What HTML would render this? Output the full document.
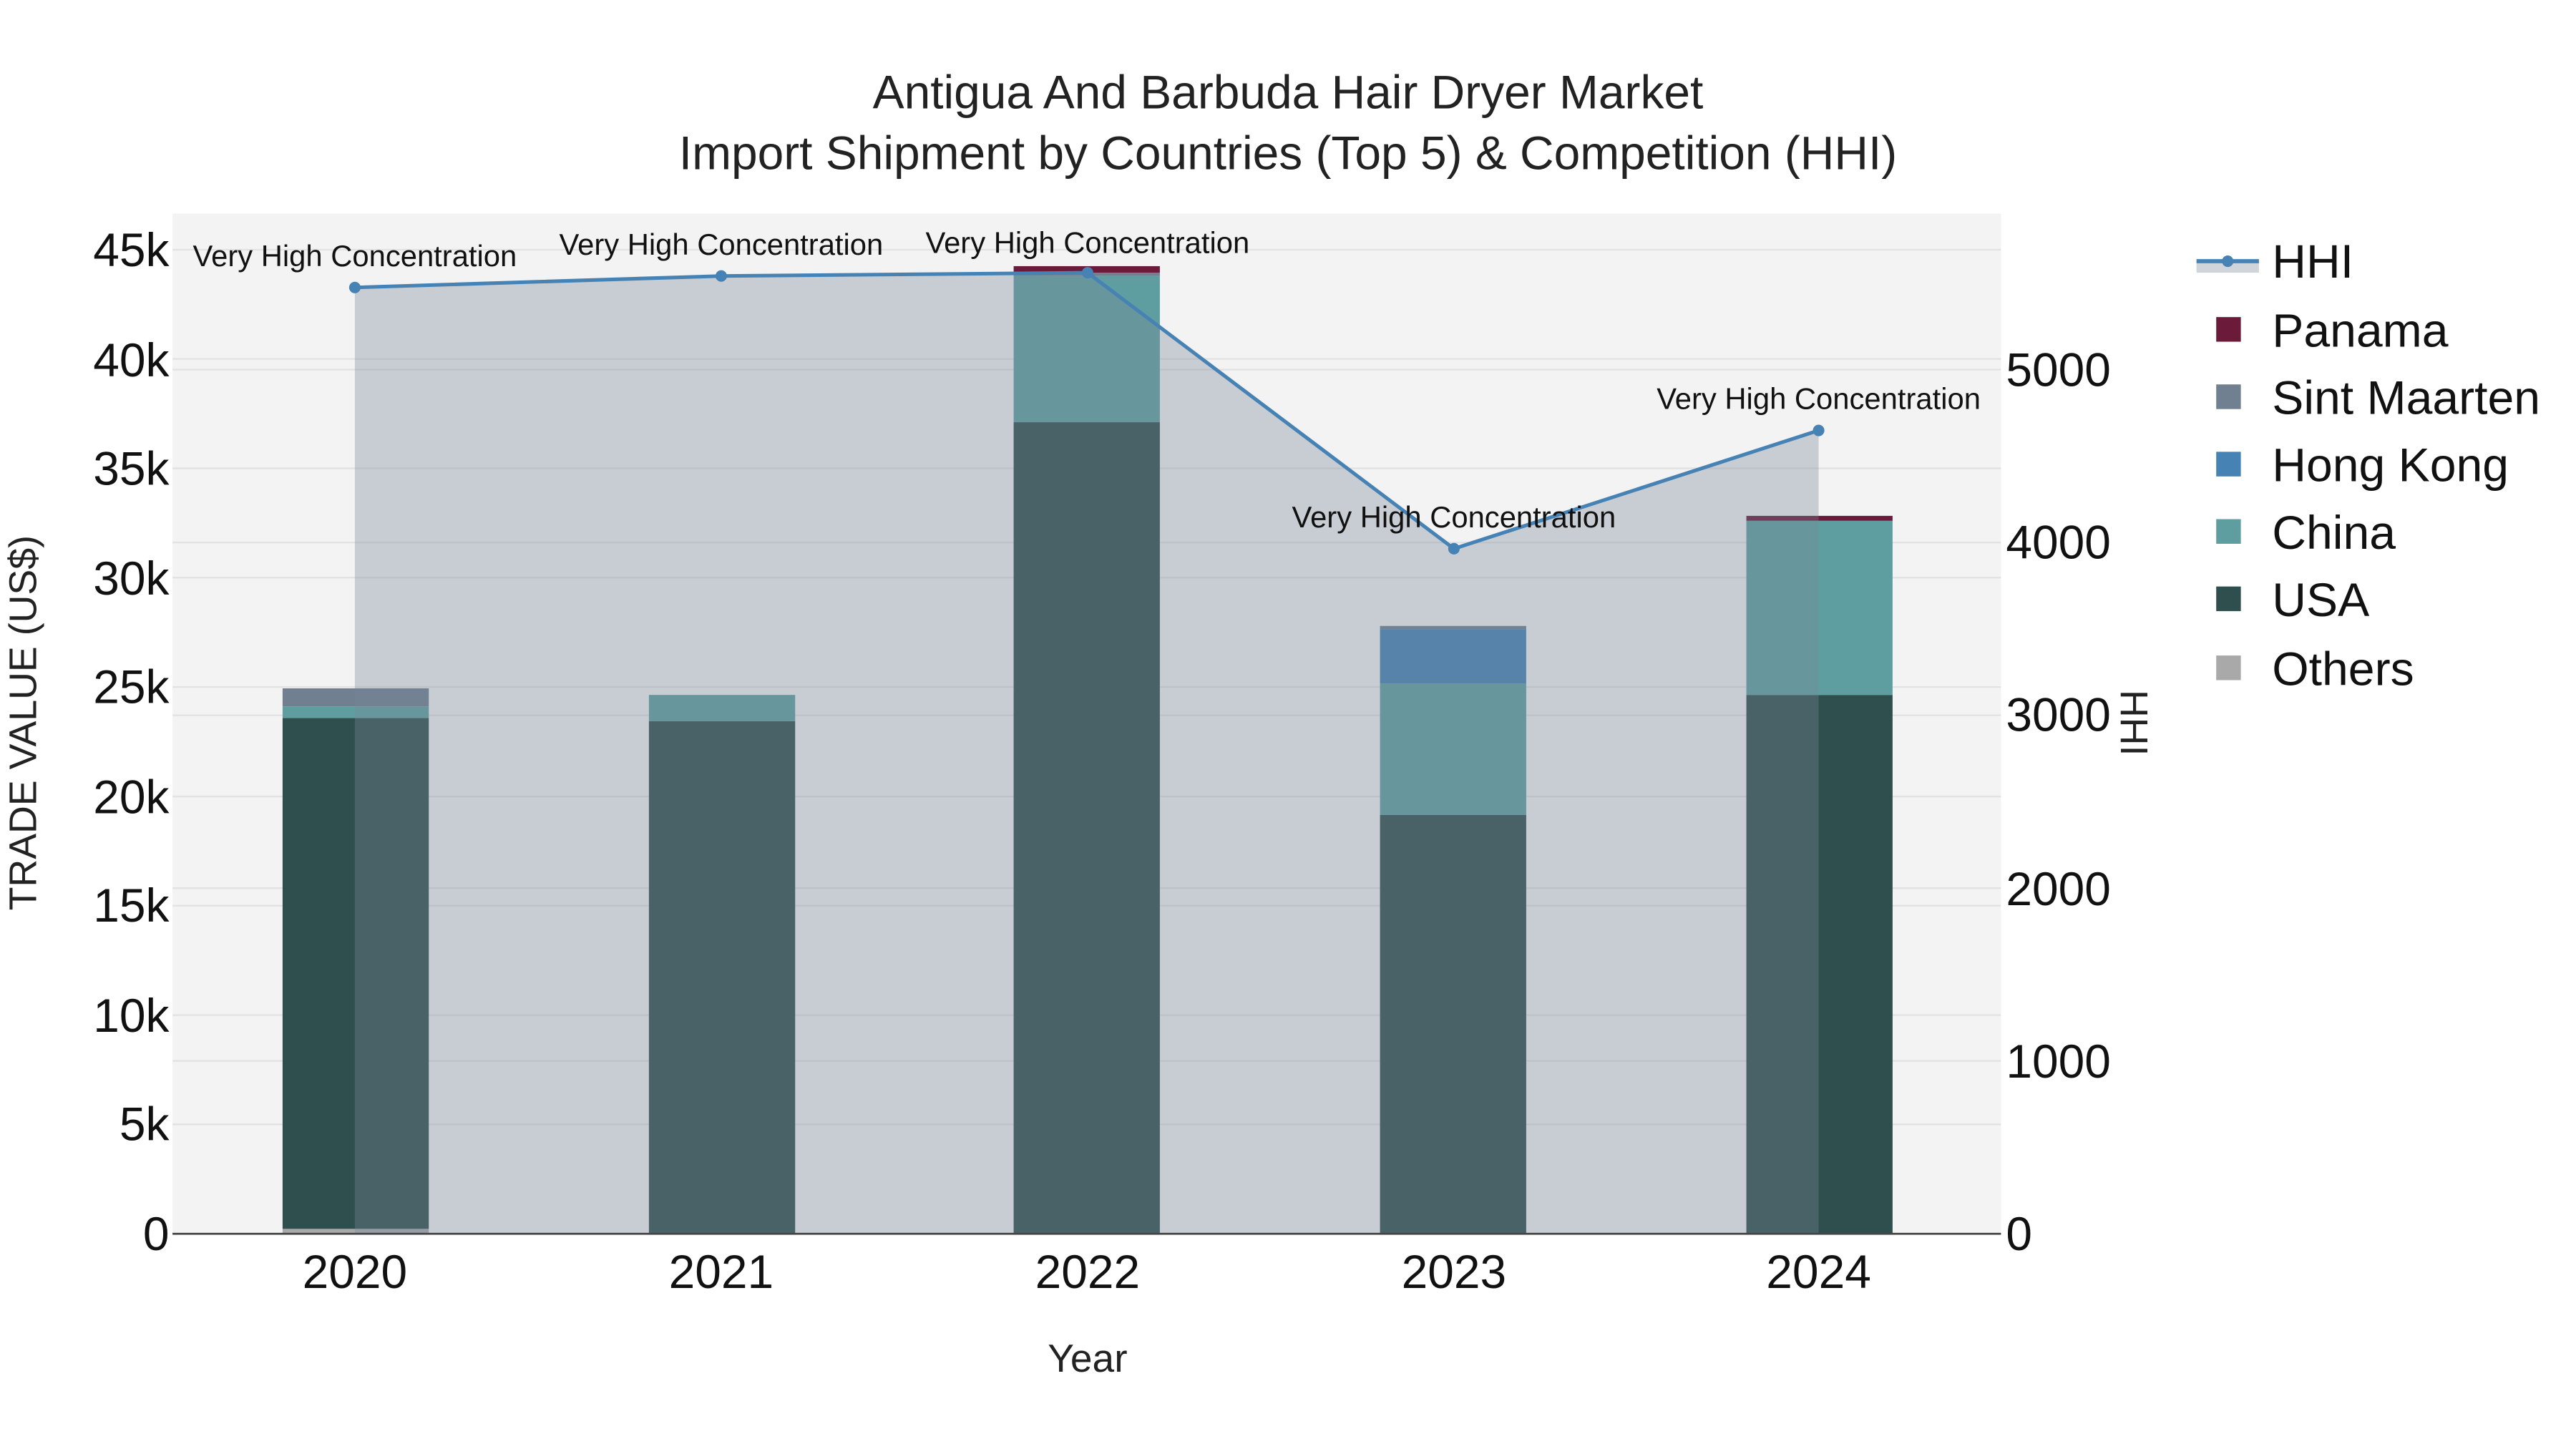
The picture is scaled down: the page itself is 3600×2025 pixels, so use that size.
<!DOCTYPE html>
<html><head><meta charset="utf-8"><style>
html,body{margin:0;padding:0;background:#fff;}
svg{display:block;}
text{font-family:"Liberation Sans",Arial,sans-serif;}
</style></head><body>
<svg width="3600" height="2025" viewBox="0 0 1568 882" xmlns="http://www.w3.org/2000/svg">
<rect x="0" y="0" width="1568" height="882" fill="#fff"/>
<rect x="105" y="130" width="1113" height="621" fill="#f3f3f3"/>
<g stroke="#e2e2e2" stroke-width="1">
<line x1="105" x2="1218" y1="684.4" y2="684.4"/><line x1="105" x2="1218" y1="617.9" y2="617.9"/>
<line x1="105" x2="1218" y1="551.3" y2="551.3"/><line x1="105" x2="1218" y1="484.8" y2="484.8"/>
<line x1="105" x2="1218" y1="418.2" y2="418.2"/><line x1="105" x2="1218" y1="351.6" y2="351.6"/>
<line x1="105" x2="1218" y1="285.1" y2="285.1"/><line x1="105" x2="1218" y1="218.5" y2="218.5"/>
<line x1="105" x2="1218" y1="152" y2="152"/>
<line x1="105" x2="1218" y1="645.8" y2="645.8"/><line x1="105" x2="1218" y1="540.6" y2="540.6"/>
<line x1="105" x2="1218" y1="435.4" y2="435.4"/><line x1="105" x2="1218" y1="330.2" y2="330.2"/>
<line x1="105" x2="1218" y1="225" y2="225"/>
</g>
<g>
<rect x="172" y="748" width="89" height="3" fill="#a9a9a9"/>
<rect x="172" y="437" width="89" height="311" fill="#2f4f4f"/>
<rect x="172" y="430" width="89" height="7" fill="#5f9ea0"/>
<rect x="172" y="419" width="89" height="11" fill="#708090"/>
<rect x="395" y="439" width="89" height="312" fill="#2f4f4f"/>
<rect x="395" y="423" width="89" height="16" fill="#5f9ea0"/>
<rect x="617" y="257" width="89" height="494" fill="#2f4f4f"/>
<rect x="617" y="168" width="89" height="89" fill="#5f9ea0"/>
<rect x="617" y="166" width="89" height="2" fill="#708090"/>
<rect x="617" y="162" width="89" height="4" fill="#6b1a3a"/>
<rect x="840" y="496" width="89" height="255" fill="#2f4f4f"/>
<rect x="840" y="416" width="89" height="80" fill="#5f9ea0"/>
<rect x="840" y="383" width="89" height="33" fill="#4682b4"/>
<rect x="840" y="381" width="89" height="2" fill="#708090"/>
<rect x="1063" y="423" width="89" height="328" fill="#2f4f4f"/>
<rect x="1063" y="317" width="89" height="106" fill="#5f9ea0"/>
<rect x="1063" y="314" width="89" height="3" fill="#6b1a3a"/>
</g>
<polygon points="216,751 216,175 439,168 662,166 885,334 1107,262 1107,751" fill="rgba(119,136,153,0.35)"/>
<polyline points="216,175 439,168 662,166 885,334 1107,262" fill="none" stroke="#4682b4" stroke-width="2.2"/>
<g fill="#4682b4"><circle cx="216" cy="175" r="3.5"/><circle cx="439" cy="168" r="3.5"/><circle cx="662" cy="166" r="3.5"/><circle cx="885" cy="334" r="3.5"/><circle cx="1107" cy="262" r="3.5"/></g>
<g font-size="18.2" fill="#111" text-anchor="middle">
<text x="216" y="162">Very High Concentration</text>
<text x="439" y="155">Very High Concentration</text>
<text x="662" y="154">Very High Concentration</text>
<text x="885" y="321">Very High Concentration</text>
<text x="1107" y="249">Very High Concentration</text>
</g>
<line x1="105" x2="1218" y1="751" y2="751" stroke="#444" stroke-width="1.2"/>
<g font-size="28.7" fill="#111" text-anchor="end">
<text x="103" y="761">0</text><text x="103" y="694">5k</text><text x="103" y="628">10k</text>
<text x="103" y="561">15k</text><text x="103" y="495">20k</text><text x="103" y="428">25k</text>
<text x="103" y="362">30k</text><text x="103" y="295">35k</text><text x="103" y="229">40k</text>
<text x="103" y="162">45k</text>
</g>
<g font-size="28.7" fill="#111" text-anchor="start">
<text x="1221" y="761">0</text><text x="1221" y="656">1000</text><text x="1221" y="551">2000</text>
<text x="1221" y="445">3000</text><text x="1221" y="340">4000</text><text x="1221" y="235">5000</text>
</g>
<g font-size="28.7" fill="#111" text-anchor="middle">
<text x="216" y="784">2020</text><text x="439" y="784">2021</text><text x="662" y="784">2022</text>
<text x="885" y="784">2023</text><text x="1107" y="784">2024</text>
</g>
<text x="662" y="835" font-size="24" text-anchor="middle" fill="#222">Year</text>
<text transform="translate(22,440) rotate(-90)" font-size="23.4" text-anchor="middle" fill="#222">TRADE VALUE (US$)</text>
<text transform="translate(1291,440) rotate(90)" font-size="23.4" text-anchor="middle" fill="#222">HHI</text>
<text x="784" y="66" font-size="28.7" text-anchor="middle" fill="#222">Antigua And Barbuda Hair Dryer Market</text>
<text x="784" y="103" font-size="28.7" text-anchor="middle" fill="#222">Import Shipment by Countries (Top 5) &amp; Competition (HHI)</text>
<rect x="1337" y="159" width="38" height="7" fill="rgba(119,136,153,0.35)"/>
<line x1="1337" x2="1375" y1="159" y2="159" stroke="#4682b4" stroke-width="2.5"/>
<circle cx="1356" cy="159" r="3.5" fill="#4682b4"/>
<rect x="1349" y="193" width="15" height="15" fill="#6b1a3a"/>
<rect x="1349" y="234" width="15" height="15" fill="#708090"/>
<rect x="1349" y="275" width="15" height="15" fill="#4682b4"/>
<rect x="1349" y="316" width="15" height="15" fill="#5f9ea0"/>
<rect x="1349" y="357" width="15" height="15" fill="#2f4f4f"/>
<rect x="1349" y="399" width="15" height="15" fill="#a9a9a9"/>
<g font-size="28.8" fill="#111">
<text x="1383" y="169">HHI</text>
<text x="1383" y="211">Panama</text>
<text x="1383" y="252">Sint Maarten</text>
<text x="1383" y="293">Hong Kong</text>
<text x="1383" y="334">China</text>
<text x="1383" y="375">USA</text>
<text x="1383" y="417">Others</text>
</g>
</svg>
</body></html>
